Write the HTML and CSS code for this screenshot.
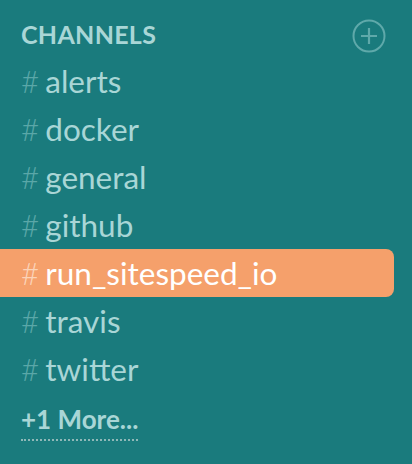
FILE: index.html
```html
<!DOCTYPE html>
<html lang="en">
<head>
    <meta charset="UTF-8">
    <meta name="viewport" content="width=device-width, initial-scale=1.0">
    <title>Channels</title>
    <link rel="stylesheet" href="styles.css">
</head>
<body>
    <div class="sidebar">
        <div class="header">
            <span class="title">CHANNELS</span>
            <svg class="add" width="34" height="34" viewBox="0 0 34 34">
                <circle cx="17" cy="17" r="15.5" fill="none" stroke="currentColor" stroke-width="2"/>
                <path d="M17 9v16M9 17h16" stroke="currentColor" stroke-width="2.2"/>
            </svg>
        </div>
        <ul class="channels">
            <li class="channel"><span class="hash">#</span>alerts</li>
            <li class="channel"><span class="hash">#</span>docker</li>
            <li class="channel"><span class="hash">#</span>general</li>
            <li class="channel"><span class="hash">#</span>github</li>
            <li class="channel active"><span class="hash">#</span>run_sitespeed_io</li>
            <li class="channel"><span class="hash">#</span>travis</li>
            <li class="channel"><span class="hash">#</span>twitter</li>
        </ul>
        <div class="more"><span>+1 More...</span></div>
    </div>
</body>
</html>
```

FILE: styles.css
```css
html, body { margin: 0; padding: 0; height: 100%; }
body { background-color: #1a7b7d; font-family: Lato, "Open Sans", sans-serif; color: #a9d6d6; }
.sidebar { width: 394px; padding-top: 10px; }
.header { display: flex; justify-content: space-between; align-items: center; padding: 0 8px 0 21px; height: 47px; }
.title { font-weight: 700; font-size: 25px; letter-spacing: 0.3px; }
.add { color: #5fa9aa; margin-top: 4px; }
.channels { list-style: none; margin: 0; padding: 0; }
.channel { height: 48px; line-height: 48px; padding-left: 21px; font-size: 31.5px; white-space: nowrap; }
.hash { color: #5ba7a8; margin-right: 6px; font-weight: 300; }
.channel.active { background-color: #f5a06b; color: #fff; border-radius: 0 8px 8px 0; }
.channel.active .hash { color: #fbd3b8; }
.more { padding: 10px 0 0 21px; font-size: 26px; font-weight: 700; }
.more span { border-bottom: 2px dotted #8fb8b8; padding-bottom: 4px; }
```
